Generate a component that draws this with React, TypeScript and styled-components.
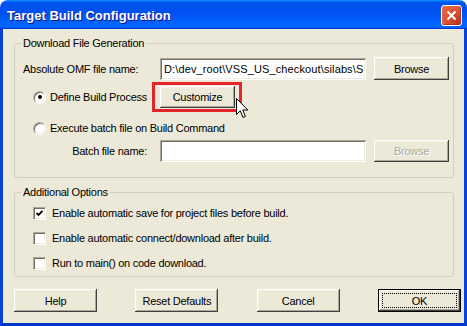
import React from "react";
import styled, { createGlobalStyle } from "styled-components";

const GlobalStyle = createGlobalStyle`
	html, body {
		margin: 0;
		padding: 0;
		background: #ffffff;
	}
`;

const Window = styled.div`
	width: 467px;
	height: 326px;
	box-sizing: border-box;
	display: flex;
	flex-direction: column;
	font-family: "Liberation Sans", Arial, sans-serif;
	font-size: 11px;
	letter-spacing: -0.25px;
	color: #000;
`;

const TitleBar = styled.div`
	height: 29px;
	flex: none;
	display: flex;
	align-items: center;
	justify-content: space-between;
	padding: 1px 5px 0 7px;
	box-sizing: border-box;
	border-radius: 8px 8px 0 0;
	background: linear-gradient(
		180deg,
		#0997ff,
		#0053ee 8%,
		#0050ee 40%,
		#0066ff 88%,
		#0066ff 93%,
		#005bff 95%,
		#003dd7 96%,
		#003dd7
	);
`;

const Title = styled.span`
	font-family: "Liberation Sans", Arial, sans-serif;
	font-weight: bold;
	font-size: 13px;
	letter-spacing: 0;
	color: #fff;
	text-shadow: 1px 1px #0f1089;
`;

const CloseButton = styled.button`
	width: 21px;
	height: 21px;
	padding: 0;
	display: grid;
	place-items: center;
	border: 1px solid #fff;
	border-radius: 3px;
	background: radial-gradient(circle at 85% 85%, #c2351b 0, #d9502f 45%, #e86e4c 100%);
	box-shadow: inset -1px -1px #b03218;
`;

const Body = styled.div`
	flex: 1;
	display: flex;
	flex-direction: column;
	background: #ece9d8;
	border-style: solid;
	border-width: 0 3px 3px;
	border-color: #0855dd #0842d6 #0038c6;
	padding: 7px 3px 0 11px;
`;

const Group = styled.fieldset<{ $pad: string }>`
	margin: 0;
	width: 440px;
	box-sizing: border-box;
	border: 1px solid #d0d0bf;
	border-radius: 3px;
	padding: ${(p) => p.$pad};
	min-width: 0;

	& + & {
		margin-top: 7px;
	}
`;

const Legend = styled.legend`
	padding: 0 2px;
	margin-left: -2px;
	line-height: 14px;
`;

const FieldRow = styled.div<{ $top: number; $h: number }>`
	display: grid;
	grid-template-columns: 129px 206px 75px;
	column-gap: 8px;
	align-items: center;
	height: ${(p) => p.$h}px;
	margin-top: ${(p) => p.$top}px;
`;

const FieldLabel = styled.label<{ $right?: boolean }>`
	white-space: nowrap;
	text-align: ${(p) => (p.$right ? "right" : "left")};
	padding-right: ${(p) => (p.$right ? "5px" : "0")};
`;

const TextField = styled.input`
	width: 206px;
	height: 22px;
	box-sizing: border-box;
	border: none;
	padding: 0 2px 0 4px;
	margin: 0;
	font: inherit;
	letter-spacing: 0.12px;
	color: #000;
	background: #fff;
	outline: none;
	box-shadow: inset 1px 1px #aca899, inset -1px -1px #fff, inset 2px 2px #716f64,
		inset -2px -2px #f1efe2;
`;

const Button = styled.button<{ $w?: number; $h?: number; $default?: boolean }>`
	position: relative;
	width: ${(p) => p.$w ?? 75}px;
	height: ${(p) => p.$h ?? 23}px;
	padding: 0;
	margin: 0;
	font: inherit;
	letter-spacing: inherit;
	color: #000;
	background: #ece9d8;
	border: ${(p) => (p.$default ? "1px solid #000" : "none")};
	box-sizing: border-box;
	box-shadow: inset -1px -1px #404040, inset 1px 1px #fff, inset -2px -2px #aca899,
		inset 2px 2px #f1efe2;

	&:disabled {
		color: #aca899;
		text-shadow: 1px 1px #fff;
	}

	${(p) =>
		p.$default &&
		`
		&::after {
			content: "";
			position: absolute;
			inset: 3px;
			border: 1px dotted #000;
		}
	`}
`;

const Highlight = styled.span`
	position: relative;
	display: inline-flex;
	justify-self: start;

	&::before {
		content: "";
		position: absolute;
		left: -8px;
		top: -4px;
		right: -7px;
		bottom: -4px;
		border: 3px solid #e5252b;
		pointer-events: none;
	}
`;

const Pointer = styled.svg`
	position: absolute;
	left: 76px;
	top: 12px;
`;

const Option = styled.label<{ $span?: boolean }>`
	display: flex;
	align-items: center;
	gap: 4px;
	padding-left: 10px;
	white-space: nowrap;
	grid-column: ${(p) => (p.$span ? "1 / -1" : "auto")};
`;

const RadioMark = styled.span<{ $checked?: boolean }>`
	width: 13px;
	height: 13px;
	box-sizing: border-box;
	border-radius: 50%;
	background: #fff;
	border: 1px solid;
	border-color: #aca899 #fff #fff #aca899;
	box-shadow: inset 1px 1px #716f64, inset -1px -1px #f1efe2;
	display: grid;
	place-items: center;

	&::after {
		content: "";
		width: 4px;
		height: 4px;
		border-radius: 50%;
		background: #000;
		display: ${(p) => (p.$checked ? "block" : "none")};
	}
`;

const CheckRow = styled.label`
	display: flex;
	align-items: center;
	gap: 6px;
	height: 20px;
	padding-left: 10px;
	white-space: nowrap;

	& + & {
		margin-top: 5px;
	}
`;

const CheckBox = styled.span`
	width: 13px;
	height: 13px;
	box-sizing: border-box;
	background: #fff;
	border: 1px solid;
	border-color: #aca899 #fff #fff #aca899;
	box-shadow: inset 1px 1px #716f64, inset -1px -1px #f1efe2;
	display: grid;
	place-items: center;
`;

const ButtonBar = styled.div`
	display: flex;
	justify-content: space-between;
	margin-top: 12px;
	width: 447px;
`;

function Radio({ checked, label, span }: { checked?: boolean; label: string; span?: boolean }) {
	return (
		<Option $span={span}>
			<RadioMark $checked={checked} />
			{label}
		</Option>
	);
}

function Check({ checked, label }: { checked?: boolean; label: string }) {
	return (
		<CheckRow>
			<CheckBox>
				{checked && (
					<svg width="7" height="7" viewBox="0 0 7 7">
						<path d="M0.5 3 L2.5 5 L6.5 1" stroke="#000" strokeWidth="1.8" fill="none" />
					</svg>
				)}
			</CheckBox>
			{label}
		</CheckRow>
	);
}

function App() {
	return (
		<>
			<GlobalStyle />
			<Window>
				<TitleBar>
					<Title>Target Build Configuration</Title>
					<CloseButton aria-label="Close">
						<svg width="11" height="11" viewBox="0 0 11 11">
							<path d="M1.5 1.5 L9.5 9.5 M9.5 1.5 L1.5 9.5" stroke="#fff" strokeWidth="2" />
						</svg>
					</CloseButton>
				</TitleBar>
				<Body>
					<Group $pad="7px 3px 15px 8px">
						<Legend>Download File Generation</Legend>
						<FieldRow $top={0} $h={23}>
							<FieldLabel>Absolute OMF file name:</FieldLabel>
							<TextField readOnly value={"D:\\dev_root\\VSS_US_checkout\\silabs\\S"} />
							<Button>Browse</Button>
						</FieldRow>
						<FieldRow $top={6} $h={22}>
							<Radio checked label="Define Build Process" />
							<Highlight>
								<Button $h={22}>Customize</Button>
								<Pointer width="13" height="21" viewBox="0 0 13 21">
									<path
										d="M0.5 0.5 V16.5 L4.3 12.8 L7 19.5 L9.4 18.5 L6.8 12 H11.8 Z"
										fill="#fff"
										stroke="#000"
										strokeWidth="1"
										strokeLinejoin="miter"
									/>
								</Pointer>
							</Highlight>
						</FieldRow>
						<FieldRow $top={9} $h={22}>
							<Radio span label="Execute batch file on Build Command" />
						</FieldRow>
						<FieldRow $top={1} $h={22}>
							<FieldLabel $right>Batch file name:</FieldLabel>
							<TextField readOnly value="" />
							<Button $h={22} disabled>
								Browse
							</Button>
						</FieldRow>
					</Group>
					<Group $pad="4px 3px 3px 8px">
						<Legend>Additional Options</Legend>
						<Check checked label="Enable automatic save for project files before build." />
						<Check label="Enable automatic connect/download after build." />
						<Check label="Run to main() on code download." />
					</Group>
					<ButtonBar>
						<Button $w={83}>Help</Button>
						<Button $w={83}>Reset Defaults</Button>
						<Button $w={83}>Cancel</Button>
						<Button $w={83} $default>
							OK
						</Button>
					</ButtonBar>
				</Body>
			</Window>
		</>
	);
}

export default App;
